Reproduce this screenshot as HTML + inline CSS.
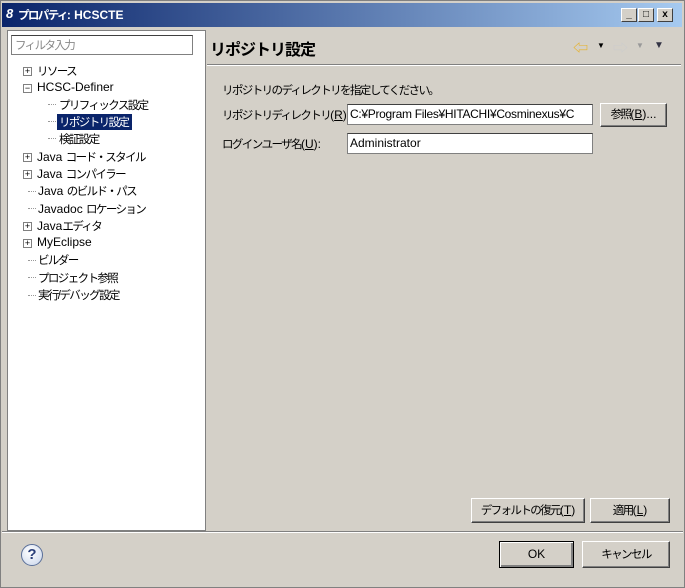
<!DOCTYPE html><html><head><meta charset="utf-8"><style>
*{margin:0;padding:0;box-sizing:border-box}
body{width:685px;height:588px;background:#d4d0c8;font-family:"Liberation Sans","Noto Sans CJK JP",sans-serif;font-size:12px;color:#000;position:relative;overflow:hidden}
.a{position:absolute;white-space:nowrap}
.j{letter-spacing:-1.6px;font-size:11.5px}
.btn{position:absolute;background:#d4d0c8;border:1px solid;border-color:#fff #404040 #404040 #fff;box-shadow:inset -1px -1px 0 #808080;text-align:center;font-size:12px}
.tb{position:absolute;width:16px;height:14px;background:#d4d0c8;border:1px solid;border-color:#fff #404040 #404040 #fff;font-size:10px;line-height:11px;text-align:center;font-weight:bold}
.pm{position:absolute;width:9px;height:9px;border:1px solid #808080;background:#fff;font-size:9px;line-height:7px;text-align:center}
.dot{position:absolute;border-top:1px dotted #999}
</style></head><body>
<div class="a" style="left:0;top:0;width:685px;height:588px;border:1px solid #808080"></div>
<div class="a" style="left:2px;top:3px;width:680px;height:24px;background:linear-gradient(90deg,#0a246a,#a6caf0)"></div>
<div class="a" style="left:6px;top:6px;color:#fff;font-weight:bold;font-size:13px;font-style:italic">8</div>
<div class="a" style="left:18px;top:7px;color:#fff;font-weight:bold;font-size:12px"><span class="j">プロパティ</span>: HCSCTE</div>
<div class="tb" style="left:621px;top:8px">_</div><div class="tb" style="left:638px;top:8px">□</div><div class="tb" style="left:657px;top:8px">x</div>
<div class="a" style="left:7px;top:30px;width:199px;height:501px;background:#fff;border:1px solid #808080"></div>
<div class="a j" style="left:11px;top:35px;width:182px;height:20px;border:1px solid #808080;border-top-color:#404040;color:#888;padding:1px 3px">フィルタ入力</div>
<div class="pm" style="left:23px;top:67px">+</div><div class="a j" style="left:37px;top:63px">リソース</div>
<div class="pm" style="left:23px;top:84px">−</div><div class="a" style="left:37px;top:80px">HCSC-Definer</div>
<div class="dot" style="left:48px;top:104px;width:8px"></div><div class="a j" style="left:59px;top:97px">プリフィックス設定</div>
<div class="dot" style="left:48px;top:121px;width:8px"></div><div class="a j" style="left:57px;top:114px;background:#0a246a;color:#fff;padding:0 4px 0 2px">リポジトリ設定</div>
<div class="dot" style="left:48px;top:138px;width:8px"></div><div class="a j" style="left:59px;top:131px">検証設定</div>
<div class="pm" style="left:23px;top:153px">+</div><div class="a" style="left:37px;top:149px">Java <span class="j">コード・スタイル</span></div>
<div class="pm" style="left:23px;top:170px">+</div><div class="a" style="left:37px;top:166px">Java <span class="j">コンパイラー</span></div>
<div class="dot" style="left:28px;top:191px;width:8px"></div><div class="a" style="left:38px;top:183px">Java <span class="j">のビルド・パス</span></div>
<div class="dot" style="left:28px;top:208px;width:8px"></div><div class="a" style="left:38px;top:201px">Javadoc <span class="j">ロケーション</span></div>
<div class="pm" style="left:23px;top:222px">+</div><div class="a" style="left:37px;top:218px">Java<span class="j">エディタ</span></div>
<div class="pm" style="left:23px;top:239px">+</div><div class="a" style="left:37px;top:235px">MyEclipse</div>
<div class="dot" style="left:28px;top:260px;width:8px"></div><div class="a j" style="left:38px;top:252px">ビルダー</div>
<div class="dot" style="left:28px;top:277px;width:8px"></div><div class="a j" style="left:38px;top:270px">プロジェクト参照</div>
<div class="dot" style="left:28px;top:295px;width:8px"></div><div class="a j" style="left:38px;top:287px">実行/デバッグ設定</div>
<div class="a" style="left:210px;top:36px;font-size:16px;font-weight:bold;letter-spacing:-1px">リポジトリ設定</div>
<div class="a" style="left:573px;top:37px;color:#e8b020;font-size:15px">⇦</div><div class="a" style="left:597px;top:41px;font-size:8px">▼</div>
<div class="a" style="left:613px;top:37px;color:#ccc;font-size:15px">⇨</div><div class="a" style="left:636px;top:41px;font-size:8px;color:#999">▼</div>
<div class="a" style="left:654px;top:40px;font-size:10px;color:#334">▼</div>
<div class="a" style="left:207px;top:64px;width:474px;border-top:1px solid #808080;border-bottom:1px solid #fff"></div>
<div class="a j" style="left:222px;top:82px">リポジトリのディレクトリを指定してください。</div>
<div class="a" style="left:222px;top:107px"><span class="j">リポジトリディレクトリ</span>(<u>R</u>):</div>
<div class="a" style="left:347px;top:104px;width:246px;height:21px;background:#fff;border:1px solid #808080;border-top-color:#404040;padding:2px 2px;overflow:hidden;letter-spacing:-0.3px">C:¥Program Files¥HITACHI¥Cosminexus¥C</div>
<div class="btn" style="left:600px;top:103px;width:67px;height:24px;line-height:21px"><span class="j">参照</span>(<u>B</u>)...</div>
<div class="a" style="left:222px;top:136px"><span class="j">ログインユーザ名</span>(<u>U</u>):</div>
<div class="a" style="left:347px;top:133px;width:246px;height:21px;background:#fff;border:1px solid #808080;border-top-color:#404040;padding:2px 2px">Administrator</div>
<div class="btn" style="left:471px;top:498px;width:114px;height:25px;line-height:22px"><span class="j">デフォルトの復元</span>(<u>T</u>)</div>
<div class="btn" style="left:590px;top:498px;width:80px;height:25px;line-height:22px"><span class="j">適用</span>(<u>L</u>)</div>
<div class="a" style="left:2px;top:531px;width:681px;border-top:1px solid #808080;border-bottom:1px solid #fff"></div>
<div class="a" style="left:21px;top:544px;width:22px;height:22px;border-radius:50%;border:1px solid #5a6f99;background:radial-gradient(circle at 40% 35%,#fff,#c8d4ea);color:#2a3f7a;font-weight:bold;font-size:15px;line-height:20px;text-align:center">?</div>
<div class="btn" style="left:499px;top:541px;width:75px;height:27px;line-height:24px;border:1px solid #000;box-shadow:inset 1px 1px 0 #fff,inset -2px -2px 0 #808080">OK</div>
<div class="btn" style="left:582px;top:541px;width:88px;height:27px;line-height:24px"><span class="j">キャンセル</span></div>
</body></html>
